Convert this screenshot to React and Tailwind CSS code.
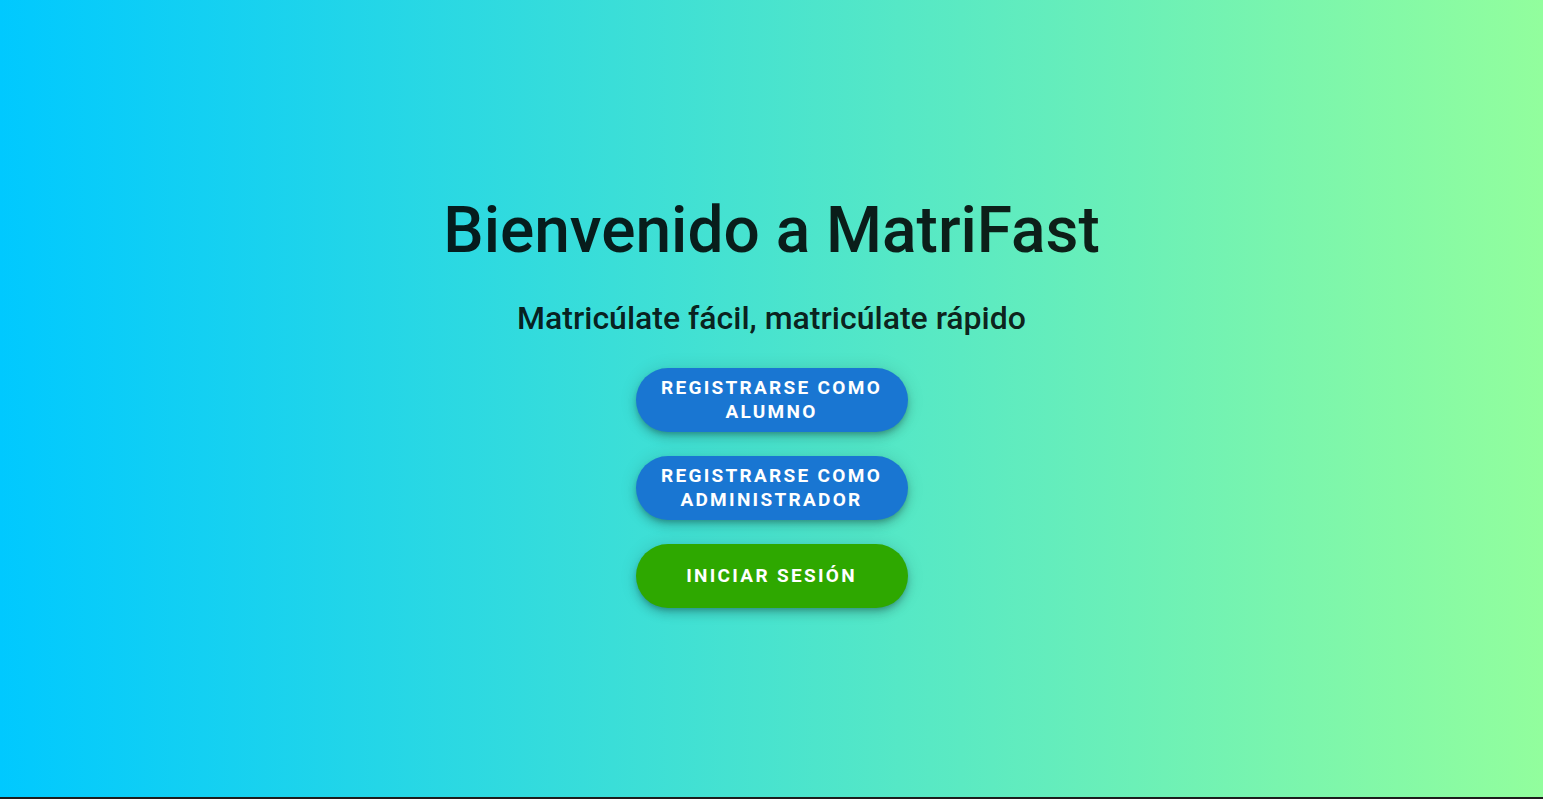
import React from "react";

const buttons = [
  { label: "Registrarse como alumno", color: "bg-[#1976d2]" },
  { label: "Registrarse como administrador", color: "bg-[#1976d2]" },
  { label: "Iniciar sesión", color: "bg-[#2ea800]" },
];

function HomePage() {
  return (
    <div className="min-h-[799px] bg-[#1c1c1c] font-['Roboto',sans-serif]">
      <div className="h-[797px] flex flex-col items-center justify-center bg-[linear-gradient(to_right,#00c9ff,#92fe9d)] text-[rgba(0,0,0,0.87)]">
        <h1 className="pt-[4px] text-[64px] leading-[1.2] font-medium">
          Bienvenido a MatriFast
        </h1>
        <p className="mt-[28px] text-[32px] leading-[1.3] font-medium">
          Matricúlate fácil, matricúlate rápido
        </p>
        <div className="mt-[29px] flex flex-col gap-6">
          {buttons.map((b) => (
            <button
              key={b.label}
              className={`${b.color} w-[272px] h-[64px] rounded-full px-5 text-white uppercase text-[19px] leading-[24px] font-bold tracking-[2.3px] shadow-[0_3px_5px_-1px_rgba(0,0,0,0.2),0_6px_10px_0_rgba(0,0,0,0.14),0_1px_18px_0_rgba(0,0,0,0.12)]`}
            >
              {b.label}
            </button>
          ))}
        </div>
      </div>
    </div>
  );
}

export default HomePage;
